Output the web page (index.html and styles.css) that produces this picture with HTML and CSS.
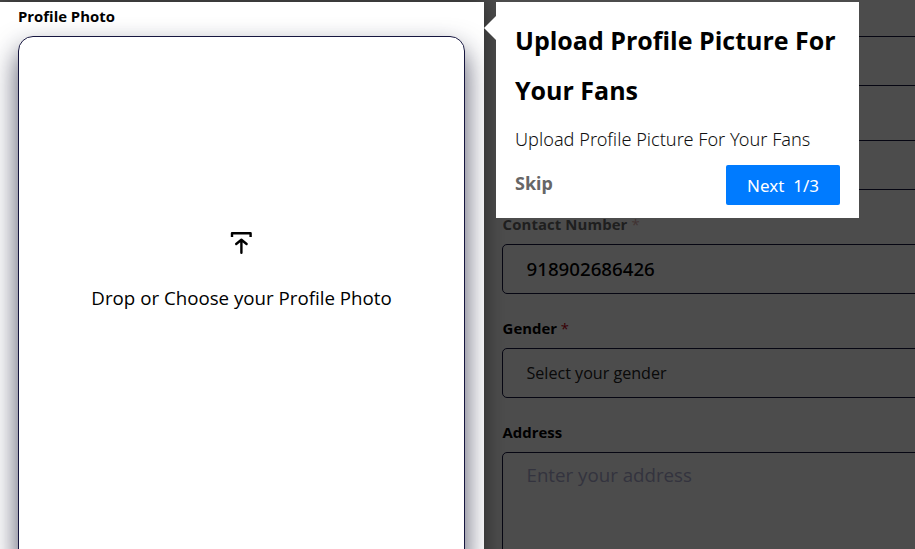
FILE: index.html
```html
<!DOCTYPE html>
<html lang="en">
<head>
  <meta charset="UTF-8">
  <meta name="viewport" content="width=device-width, initial-scale=1.0">
  <title>Edit Profile</title>
  <link rel="stylesheet" href="styles.css">
</head>
<body>
  <main class="profile">
    <section class="photo">
      <h2 class="photo__label">Profile Photo</h2>
      <div class="photo__drop">
        <svg class="photo__icon" width="24" height="26" viewBox="0 0 24 26" fill="none" stroke="#000" stroke-width="2.4" stroke-linecap="round" stroke-linejoin="round">
          <path d="M2 7V3.2h18.6V7" stroke-linecap="butt" />
          <path d="M11.4 22.8V10M6.2 14l5.2-4.2 5.2 4.2" />
        </svg>
        <p class="photo__text">Drop or Choose your Profile Photo</p>
      </div>
    </section>

    <form class="form">
      <div class="field"><div class="field__box"></div></div>
      <div class="field"><div class="field__box"></div></div>
      <div class="field">
        <label class="field__label field__label--faded">Contact Number <span class="required">*</span></label>
        <div class="field__box field__box--number">918902686426</div>
      </div>
      <div class="field">
        <label class="field__label">Gender <span class="required">*</span></label>
        <div class="field__box field__box--select">Select your gender</div>
      </div>
      <div class="field field--last">
        <label class="field__label">Address</label>
        <div class="field__box field__box--area">Enter your address</div>
      </div>
    </form>
  </main>

  <div class="tour">
    <h1 class="tour__title">Upload Profile Picture For<br>Your Fans</h1>
    <p class="tour__text">Upload Profile Picture For Your Fans</p>
    <div class="tour__actions">
      <button class="tour__skip">Skip</button>
      <button class="tour__next">Next&nbsp; 1/3</button>
    </div>
  </div>
</body>
</html>
```
FILE: styles.css
```css
* {
  box-sizing: border-box;
  margin: 0;
  padding: 0;
}

body {
  font-family: "Open Sans", "Noto Sans", sans-serif;
  background-color: #fff;
  color: #000;
  height: 549px;
  overflow: hidden;
}

.profile {
  display: flex;
  align-items: flex-start;
  height: 549px;
  padding-top: 2px;
  overflow: hidden;
}

/* highlighted step, the rest of the page is dimmed by its shadow */
.photo {
  position: relative;
  z-index: 1;
  width: 484px;
  height: 640px;
  padding: 0 19px 0 18px;
  flex-shrink: 0;
  overflow: hidden;
  background-color: #fff;
  box-shadow: 0 0 0 2000px rgba(0, 0, 0, 0.7), 0 0 20px rgba(0, 0, 0, 0.5);
}

.photo__label {
  height: 34px;
  font-size: 14.9px;
  font-weight: 700;
  line-height: 29px;
  white-space: nowrap;
}

.photo__drop {
  display: flex;
  flex-direction: column;
  align-items: center;
  height: 528px;
  padding-top: 193px;
  border: 1px solid #16163f;
  border-radius: 15px;
  box-shadow: 0 14px 28px rgba(20, 22, 50, 0.75);
}

.photo__icon {
  display: block;
}

.photo__text {
  margin-top: 29px;
  font-size: 18.72px;
  line-height: 26px;
  white-space: nowrap;
}

.form {
  flex: 1;
  min-width: 0;
  padding-left: 18px;
}

.field {
  display: flex;
  flex-direction: column;
  justify-content: flex-end;
  height: 104px;
  margin-right: -10px;
  padding-bottom: 20px;
}

.field--last {
  height: auto;
  padding-top: 4px;
}

.field__label {
  font-size: 14.9px;
  font-weight: 700;
  line-height: 20px;
  margin-bottom: 10px;
  padding-left: 0.6px;
  white-space: nowrap;
}

.field__label--faded {
  letter-spacing: 0.1px;
  color: #686868;
}

.field__box {
  height: 50px;
  flex-shrink: 0;
  border: 1px solid #16163f;
  border-radius: 5px;
  padding: 0 23.5px;
  line-height: 48px;
}

.field__box--number {
  font-family: "Noto Sans", sans-serif;
  font-size: 18.7px;
  font-weight: 500;
}

.field__box--select {
  font-size: 16.1px;
  color: #222;
}

.field__box--area {
  height: 150px;
  font-size: 18.7px;
  line-height: 44px;
  color: #acacd0;
}

.required {
  color: #c00010;
  font-weight: 400;
}

.field__label--faded .required {
  color: #d9a9a9;
}

.tour {
  position: absolute;
  z-index: 2;
  top: 2px;
  left: 496px;
  width: 363px;
  height: 216px;
  padding: 13px 19px;
  background-color: #fff;
}

.tour::before {
  content: "";
  position: absolute;
  left: -12px;
  top: 14px;
  border: 12px solid transparent;
  border-left: 0;
  border-right-color: #fff;
}

.tour__title {
  font-size: 25px;
  font-weight: 700;
  line-height: 50px;
  white-space: nowrap;
}

.tour__text {
  font-family: "Noto Sans", sans-serif;
  font-size: 18.15px;
  font-weight: 300;
  line-height: 25px;
  margin-top: 12px;
  color: #111;
  white-space: nowrap;
}

.tour__actions {
  display: flex;
  justify-content: space-between;
  align-items: flex-start;
  margin-top: 13px;
}

.tour__skip {
  border: none;
  background: none;
  font-family: "Noto Sans", sans-serif;
  font-size: 18px;
  font-weight: 700;
  line-height: 36px;
  color: #666;
}

.tour__next {
  width: 114px;
  height: 40px;
  border: none;
  border-radius: 2px;
  background-color: #007bff;
  font-family: "Noto Sans", sans-serif;
  font-size: 17px;
  color: #fff;
}
```
